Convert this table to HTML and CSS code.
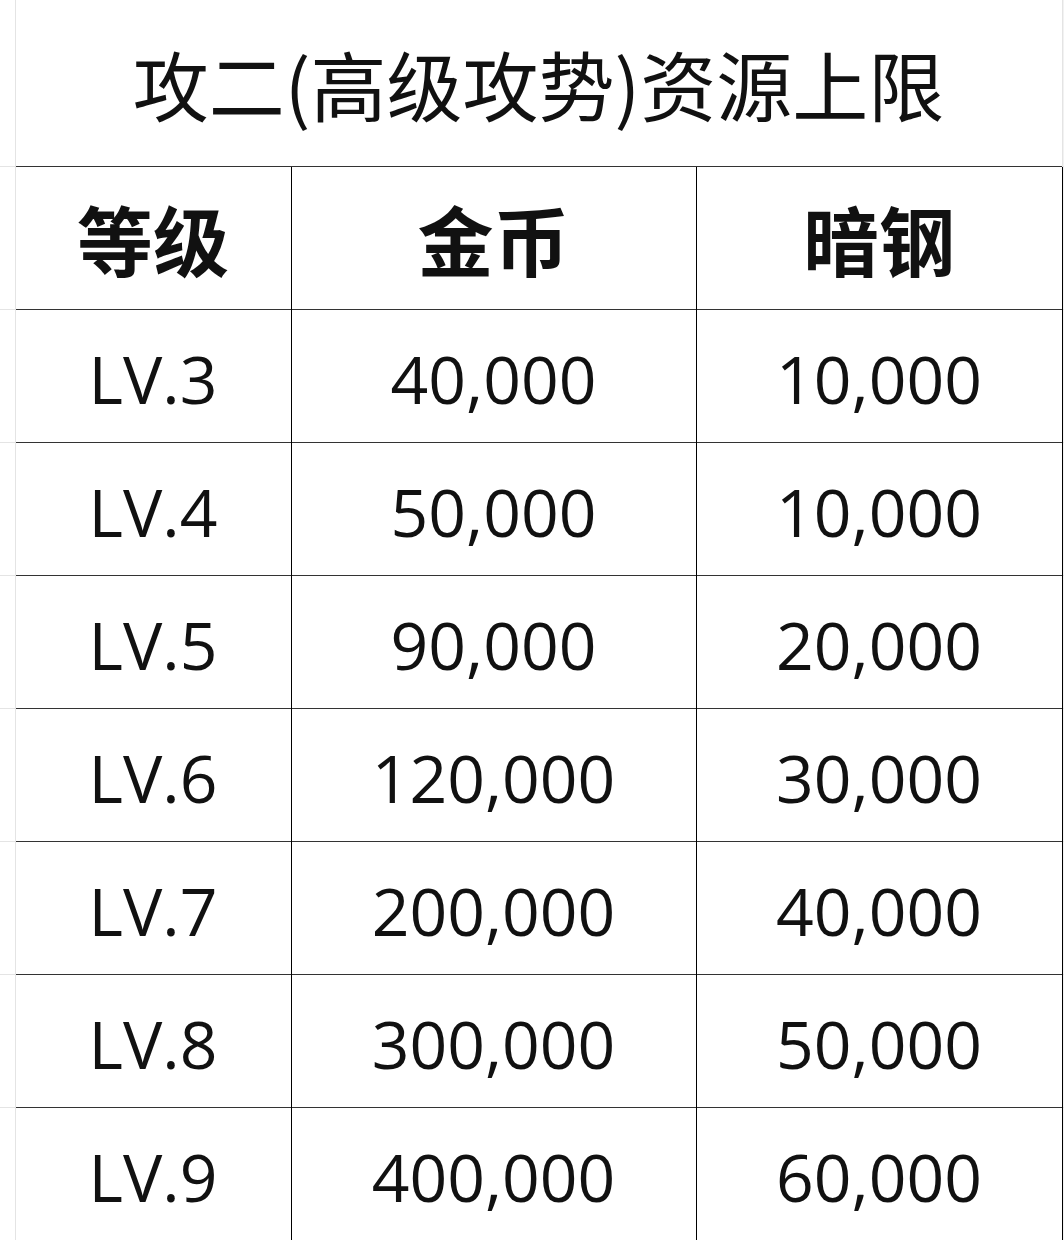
FILE: index.html
```html
<!DOCTYPE html>
<html lang="zh-CN">
<head>
<meta charset="utf-8">
<title>攻二(高级攻势)资源上限</title>
<link rel="stylesheet" href="styles.css">
</head>
<body>
<table class="sheet">
  <colgroup>
    <col class="c-gut"><col class="c-lv"><col class="c-gold"><col class="c-steel"><col class="c-edge">
  </colgroup>
  <tr class="r-title">
    <td class="gut"></td>
    <td class="title" colspan="3">攻二(高级攻势)资源上限</td>
    <td class="edge"></td>
  </tr>
  <tr class="r-head">
    <td class="gut"></td>
    <th>等级</th><th>金币</th><th>暗钢</th>
    <td class="edge"></td>
  </tr>
  <tr class="r-data"><td class="gut"></td><td>LV.3</td><td>40,000</td><td>10,000</td><td class="edge"></td></tr>
  <tr class="r-data"><td class="gut"></td><td>LV.4</td><td>50,000</td><td>10,000</td><td class="edge"></td></tr>
  <tr class="r-data"><td class="gut"></td><td>LV.5</td><td>90,000</td><td>20,000</td><td class="edge"></td></tr>
  <tr class="r-data"><td class="gut"></td><td>LV.6</td><td>120,000</td><td>30,000</td><td class="edge"></td></tr>
  <tr class="r-data"><td class="gut"></td><td>LV.7</td><td>200,000</td><td>40,000</td><td class="edge"></td></tr>
  <tr class="r-data"><td class="gut"></td><td>LV.8</td><td>300,000</td><td>50,000</td><td class="edge"></td></tr>
  <tr class="r-data"><td class="gut"></td><td>LV.9</td><td>400,000</td><td>60,000</td><td class="edge"></td></tr>
</table>
</body>
</html>
```

FILE: styles.css
```css
html, body {
  margin: 0;
  padding: 0;
  background: #ffffff;
}

.sheet {
  width: 1064px;
  table-layout: fixed;
  border-collapse: collapse;
  border-spacing: 0;
  color: #111;
}

.c-gut { width: 15px; }
.c-lv { width: 276px; }
.c-gold { width: 405px; }
.c-steel { width: 366px; }
.c-edge { width: 2px; }

.sheet td, .sheet th {
  padding: 0;
  text-align: center;
  vertical-align: middle;
  border-top: 1px solid #333;
  border-left: 1px solid #000;
}

.sheet .gut {
  border-top: 1px solid #e4e4e4;
  border-left: none;
  border-right: 1px solid #e4e4e4;
}

.sheet .edge {
  border-top: 1px solid #e4e4e4;
  border-left: 1px solid #000;
  background: #f2f2f2;
}

.r-title { height: 166px; }
.r-title td { border-top: none; }
.sheet .r-title .gut { border-top: none; }
.sheet .r-title .edge { border-top: none; border-left: 1px solid #e4e4e4; }

.title {
  font-family: "Noto Sans CJK SC", "Noto Sans", sans-serif;
  font-weight: 400;
  font-size: 76px;
  line-height: 1;
  padding-top: 10px;
  border-left: none;
}

.r-head { height: 143px; }
.r-head th {
  font-family: "Noto Sans CJK SC", "Noto Sans", sans-serif;
  font-weight: 700;
  font-size: 76px;
  line-height: 1;
}
.r-head th:nth-child(2) { border-left: none; }

.r-data { height: 133px; }
.r-data td {
  font-family: "Open Sans", "Liberation Sans", sans-serif;
  font-size: 66px;
  line-height: 1;
  padding-top: 4px;
}
.r-data td:nth-child(2) { border-left: none; }
.sheet .r-data td.gut, .sheet .r-data td.edge { padding-top: 0; }
```
